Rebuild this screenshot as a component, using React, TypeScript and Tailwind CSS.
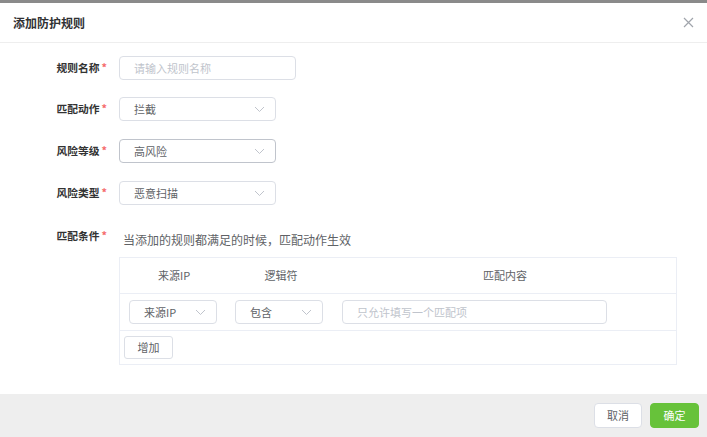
import React from 'react'

const font = { fontFamily: '"Noto Sans CJK SC", "Noto Sans", sans-serif' }

function Chevron() {
  return (
    <svg width="11" height="7" viewBox="0 0 11 7" className="shrink-0">
      <path d="M1 1l4.5 4.5L10 1" fill="none" stroke="#c0c4cc" strokeWidth="1" />
    </svg>
  )
}

function Select({ value, width, strong }: { value: string; width: string; strong?: boolean }) {
  return (
    <div
      className={`flex h-6 items-center justify-between rounded-[4px] border bg-white pl-[14px] pr-[10px] text-[11px] text-[#606266] ${width} ${
        strong ? 'border-[#c0c4cc]' : 'border-[#dcdfe6]'
      }`}
    >
      <span>{value}</span>
      <Chevron />
    </div>
  )
}

function Label({ text }: { text: string }) {
  return (
    <div className="w-[108px] shrink-0 pr-[1px] text-right text-[10.75px] font-semibold text-[#333]">
      {text}
      <span className="ml-[2px] text-[#f56c6c]">*</span>
    </div>
  )
}

export default function App() {
  return (
    <div className="flex h-[437px] w-[707px] flex-col bg-white" style={font}>
      {/* top edge of the overlay */}
      <div className="h-[3px] bg-[#8a8a8a]" />

      {/* Header */}
      <div className="flex h-[40px] items-center justify-between border-b border-[#eeeeee] pl-[13px] pr-[13px]">
        <h1 className="text-[12px] font-semibold text-[#303133]">添加防护规则</h1>
        <svg width="11" height="11" viewBox="0 0 11 11">
          <path d="M1 1l9 9M10 1l-9 9" stroke="#a0a4ab" strokeWidth="1.2" />
        </svg>
      </div>

      {/* Form */}
      <div className="flex flex-1 flex-col pt-[13px]">
        <div className="flex items-center gap-[11px]">
          <Label text="规则名称" />
          <div className="flex h-6 w-[177px] items-center rounded-[4px] border border-[#dcdfe6] pl-[14px] text-[11px] text-[#c0c4cc]">
            请输入规则名称
          </div>
        </div>

        <div className="mt-[17px] flex items-center gap-[11px]">
          <Label text="匹配动作" />
          <Select value="拦截" width="w-[157px]" />
        </div>

        <div className="mt-[18px] flex items-center gap-[11px]">
          <Label text="风险等级" />
          <Select value="高风险" width="w-[157px]" strong />
        </div>

        <div className="mt-[18px] flex items-center gap-[11px]">
          <Label text="风险类型" />
          <Select value="恶意扫描" width="w-[157px]" />
        </div>

        <div className="mt-[22px] flex items-start gap-[11px]">
          <div className="pt-[1px]">
            <Label text="匹配条件" />
          </div>
          <div className="flex flex-col">
            <p className="ml-[4px] mt-[6px] text-[12px] leading-[14px] text-[#606266]">
              当添加的规则都满足的时候，匹配动作生效
            </p>

            {/* Condition table */}
            <div className="mt-[10px] w-[558px] border border-[#ebeef5] text-[11px]">
              <div className="flex h-[36px] items-center border-b border-[#ebeef5] text-[#606266]">
                <div className="w-[108px] text-center">来源IP</div>
                <div className="w-[106px] text-center">逻辑符</div>
                <div className="flex-1 text-center">匹配内容</div>
              </div>
              <div className="flex h-[37px] items-center border-b border-[#ebeef5]">
                <div className="w-[108px] pl-[9px]">
                  <Select value="来源IP" width="w-[88px]" />
                </div>
                <div className="w-[106px] pl-[7px]">
                  <Select value="包含" width="w-[88px]" />
                </div>
                <div className="flex-1 pl-[8px]">
                  <div className="flex h-6 w-[265px] items-center rounded-[4px] border border-[#dcdfe6] pl-[14px] text-[11px] text-[#c0c4cc]">
                    只允许填写一个匹配项
                  </div>
                </div>
              </div>
              <div className="flex h-[33px] items-center pl-[4px]">
                <button className="h-[23px] w-[49px] rounded-[3px] border border-[#dcdfe6] bg-white text-[11px] text-[#606266]">
                  增加
                </button>
              </div>
            </div>
          </div>
        </div>
      </div>

      {/* Footer */}
      <div className="flex h-[43px] items-center justify-end gap-[8px] bg-[#eeeeee] pr-[8px]">
        <button className="h-[25px] w-[48px] rounded-[4px] border border-[#dcdfe6] bg-white text-[11px] text-[#606266]">
          取消
        </button>
        <button className="h-[25px] w-[49px] rounded-[4px] border border-[#67c23a] bg-[#67c23a] text-[11px] text-white">
          确定
        </button>
      </div>
    </div>
  )
}
